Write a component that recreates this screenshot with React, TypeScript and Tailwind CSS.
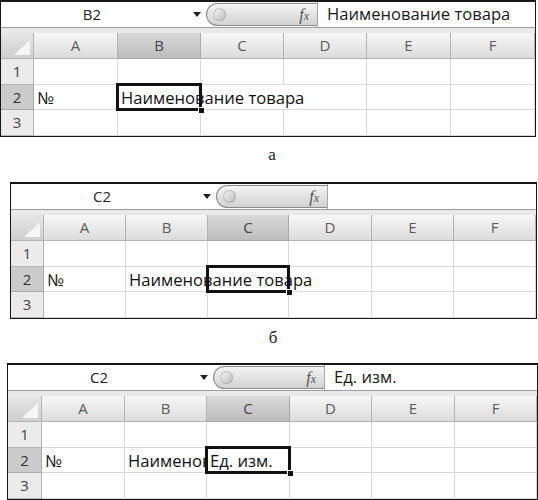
import type { ReactNode } from "react";

const cellFont = "font-['Open_Sans',sans-serif]";

function FormulaBar({ name, formula }: { name: string; formula: string }) {
  return (
    <div className="flex h-[25px] items-stretch bg-white">
      <div className="flex w-[182px] items-center justify-center text-[15px] text-[#222]">
        {name}
      </div>
      <div className="flex w-[23px] items-center pl-[10px]">
        <svg width="8" height="5" viewBox="0 0 8 5">
          <polygon points="0,0 8,0 4,5" fill="#222" />
        </svg>
      </div>
      <div className="my-[1px] flex w-[111px] items-center justify-between rounded-l-full border border-r-0 border-[#8a8a8a] bg-linear-to-b from-[#f4f4f4] to-[#d2d2d2] pl-[6px] pr-[8px]">
        <div className="h-[13px] w-[13px] rounded-full bg-linear-to-br from-[#fafafa] to-[#b9b9b9] shadow-[inset_0_0_2px_#888]" />
        <span className="font-['Liberation_Serif',serif] text-[16px] italic leading-none text-[#555]">
          f<span className="text-[12px]">x</span>
        </span>
      </div>
      <div className="flex flex-1 items-center border-l border-[#a8a8a8] pl-[9px] text-[16.6px] text-[#1a1a1a]">
        {formula}
      </div>
    </div>
  );
}

function ColHead({ label, active }: { label: string; active?: boolean }) {
  return (
    <div
      className={
        active
          ? "flex items-center justify-center border-b border-r border-[#a9a9a9] bg-linear-to-b from-[#d9d9d9] to-[#bdbdbd] text-[15px] text-[#444]"
          : "flex items-center justify-center border-b border-r border-[#b4b4b4] bg-linear-to-b from-[#f7f7f7] to-[#dcdcdc] text-[15px] text-[#5c5c5c]"
      }
    >
      {label}
    </div>
  );
}

function RowHead({ label, active }: { label: string; active?: boolean }) {
  return (
    <div
      className={
        active
          ? "flex items-center justify-center border-b border-r border-[#a9a9a9] bg-[#cbcbcb] text-[15px] text-[#333]"
          : "flex items-center justify-center border-b border-r border-[#b4b4b4] bg-[#ebebeb] text-[15px] text-[#444]"
      }
    >
      {label}
    </div>
  );
}

function Cell({ children, className = "" }: { children?: ReactNode; className?: string }) {
  return (
    <div
      className={
        "flex items-end overflow-hidden whitespace-nowrap border-b border-r border-[#d9d9d9] pb-[1px] pl-[3px] text-[16.6px] leading-[20px] text-[#111] " +
        className
      }
    >
      {children}
    </div>
  );
}

// drawn over the grid area it is placed in
function Selection({ className }: { className: string }) {
  return (
    <div className={"pointer-events-none absolute inset-0 row-start-3 row-end-4 " + className}>
      <div className="absolute inset-[-2px_-1px_-1px_-2px] border-[3px] border-[#111]" />
      <div className="absolute bottom-[-4px] right-[-4px] h-[7px] w-[7px] border border-white bg-[#111]" />
    </div>
  );
}

type SheetProps = {
  name: string;
  formula: string;
  frame: string;
  cols: string;
  active: string;
  row2: ReactNode;
  selection: ReactNode;
};

function Sheet({ name, formula, frame, cols, active, row2, selection }: SheetProps) {
  const letters = ["A", "B", "C", "D", "E", "F"];
  return (
    <div className={"border-x border-b border-t-2 border-[#161616] bg-white " + cellFont + " " + frame}>
      <FormulaBar name={name} formula={formula} />
      <div className="h-[6px] border-t border-[#9c9c9c] bg-[#e9e9e9]" />
      <div className={"relative grid grid-rows-[26px_26px_25px_26px] " + cols}>
        <div className="relative border-b border-r border-[#b4b4b4] bg-linear-to-b from-[#e6e6e6] to-[#cfcfcf]">
          <svg className="absolute bottom-[3px] right-[3px]" width="16" height="15" viewBox="0 0 16 15">
            <polygon points="16,0 16,15 0,15" fill="#f6f6f6" />
          </svg>
        </div>
        {letters.map((l) => (
          <ColHead key={l} label={l} active={l === active} />
        ))}

        <RowHead label="1" />
        {letters.map((l) => (
          <Cell key={l} />
        ))}

        <RowHead label="2" active />
        {row2}

        <RowHead label="3" />
        {letters.map((l) => (
          <Cell key={l} />
        ))}

        {selection}
      </div>
    </div>
  );
}

function Caption({ children, className }: { children: string; className: string }) {
  return (
    <div className={"text-center font-['Liberation_Serif',serif] text-[17px] leading-[20px] text-[#222] " + className}>
      {children}
    </div>
  );
}

export default function App() {
  return (
    <div className="h-[500px] w-[538px] overflow-hidden bg-white">
      <Sheet
        name="B2"
        formula="Наименование товара"
        frame="w-[536px]"
        cols="grid-cols-[33px_84px_83px_83px_83px_84px_1fr]"
        active="B"
        row2={
          <>
            <Cell>№</Cell>
            <Cell className="col-span-3">Наименование товара</Cell>
            <Cell />
            <Cell />
          </>
        }
        selection={<Selection className="col-start-3 col-end-4" />}
      />
      <div className="h-[45px] pt-[8px]">
        <Caption className="pl-[6px]">а</Caption>
      </div>
      <Sheet
        name="C2"
        formula=""
        frame="ml-[10px] w-[527px]"
        cols="grid-cols-[33px_82px_82px_81px_83px_82px_1fr]"
        active="C"
        row2={
          <>
            <Cell>№</Cell>
            <Cell className="col-span-3">Наименование товара</Cell>
            <Cell />
            <Cell />
          </>
        }
        selection={<Selection className="col-start-4 col-end-5" />}
      />
      <div className="h-[44px] pt-[9px]">
        <Caption className="pl-[8px]">б</Caption>
      </div>
      <Sheet
        name="C2"
        formula="Ед. изм."
        frame="ml-[7px] w-[531px]"
        cols="grid-cols-[34px_83px_82px_83px_82px_83px_1fr]"
        active="C"
        row2={
          <>
            <Cell>№</Cell>
            <Cell>Наименование товара</Cell>
            <Cell>Ед. изм.</Cell>
            <Cell />
            <Cell />
            <Cell />
          </>
        }
        selection={<Selection className="col-start-4 col-end-5" />}
      />
    </div>
  );
}
